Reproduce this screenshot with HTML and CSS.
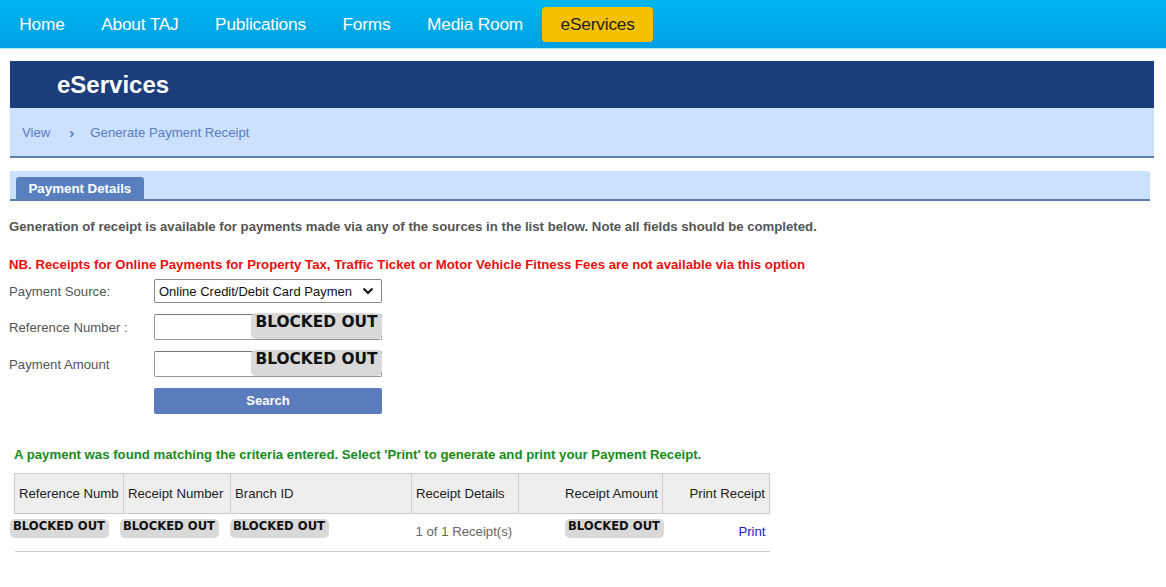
FILE: index.html
```html
<!DOCTYPE HTML>
<html>
    <head>
        <meta charset="UTF-8">
        <title>eServices - Generate Payment Receipt</title>
        <link rel="stylesheet" href="styles.css">
    </head>
    <body>
        <div class="nav">
            <a class="nav-item" href="#">Home</a>
            <a class="nav-item" href="#">About TAJ</a>
            <a class="nav-item" href="#">Publications</a>
            <a class="nav-item" href="#">Forms</a>
            <a class="nav-item" href="#">Media Room</a>
            <a class="nav-item active" href="#">eServices</a>
        </div>

        <div class="page">
            <div class="banner">eServices</div>
            <div class="crumbs">
                <span>View</span>
                <span class="sep">&#8250;</span>
                <span>Generate Payment Receipt</span>
            </div>

            <div class="tabbar">
                <div class="tab">Payment Details</div>
            </div>

            <p class="intro">Generation of receipt is available for payments made via any of the sources in the list below. Note all fields should be completed.</p>
            <p class="warn">NB. Receipts for Online Payments for Property Tax, Traffic Ticket or Motor Vehicle Fitness Fees are not available via this option</p>

            <div class="form">
                <div class="row">
                    <label>Payment Source:</label>
                    <div class="field select">
                        <span>Online Credit/Debit Card Paymen</span>
                        <svg width="12" height="8" viewBox="0 0 12 8"><path d="M1.5 1.5 L6 6 L10.5 1.5" fill="none" stroke="#111" stroke-width="2"/></svg>
                    </div>
                </div>
                <div class="row">
                    <label>Reference Number :</label>
                    <div class="field input">
                        <span class="blocked big">BLOCKED OUT</span>
                    </div>
                </div>
                <div class="row">
                    <label>Payment Amount</label>
                    <div class="field input">
                        <span class="blocked big">BLOCKED OUT</span>
                    </div>
                </div>
                <div class="row">
                    <label></label>
                    <div class="btn">Search</div>
                </div>
            </div>

            <p class="found">A payment was found matching the criteria entered. Select 'Print' to generate and print your Payment Receipt.</p>

            <table class="result">
                <colgroup>
                    <col style="width:109px">
                    <col style="width:107px">
                    <col style="width:181px">
                    <col style="width:107px">
                    <col style="width:144px">
                    <col style="width:107px">
                </colgroup>
                <thead>
                    <tr>
                        <th>Reference Numb</th>
                        <th>Receipt Number</th>
                        <th>Branch ID</th>
                        <th>Receipt Details</th>
                        <th class="right">Receipt Amount</th>
                        <th class="right">Print Receipt</th>
                    </tr>
                </thead>
                <tbody>
                    <tr>
                        <td><span class="blocked small s1">BLOCKED OUT</span></td>
                        <td><span class="blocked small s2">BLOCKED OUT</span></td>
                        <td><span class="blocked small s3">BLOCKED OUT</span></td>
                        <td class="muted">1 of 1 Receipt(s)</td>
                        <td class="right"><span class="blocked small amt">BLOCKED OUT</span></td>
                        <td class="right link"><a class="print" href="#">Print</a></td>
                    </tr>
                </tbody>
            </table>
        </div>
    </body>
</html>
```

FILE: styles.css
```css
body{margin:0;font-family:"Liberation Sans",Arial,sans-serif;background:#fff;}
p{margin:0;}
a{text-decoration:none;}

.nav{
    display:flex;
    align-items:center;
    height:48px;
    padding-left:1px;
    background:linear-gradient(#00b6ef,#009fe0);
    border-bottom:1px solid #aee6fb;
}
.nav-item{
    padding:0 18.3px;
    height:35px;
    line-height:35px;
    font-size:17.3px;
    color:#fff;
    letter-spacing:-0.2px;
}
.nav-item.active{
    background:#f5c000;
    color:#222;
    border-radius:4px;
    margin-left:1px;
}

.page{padding:12px 12px 0 10px;}
.banner{
    height:47px;
    line-height:47px;
    padding-left:47px;
    background:#1b3d7c;
    color:#fff;
    font-size:24px;
    font-weight:bold;
}
.crumbs{
    display:flex;
    align-items:center;
    height:47px;
    padding:1px 0 0 12px;
    background:#cce0ff;
    border-bottom:2px solid #5e7fab;
    color:#5b7cbd;
    font-size:13.2px;
}
.crumbs .sep{margin:0 16px 0 19px;font-size:15px;font-weight:bold;}

.tabbar{
    display:flex;
    align-items:flex-end;
    height:28px;
    margin:13px 4px 0 0;
    padding-left:6px;
    background:#cce0ff;
    border-bottom:2px solid #5e7fab;
    border-top-right-radius:3px;
}
.tab{
    height:22px;
    line-height:23px;
    padding:0 12.5px;
    background:#5a7fbf;
    color:#fff;
    font-size:13.3px;
    font-weight:bold;
    border-radius:3px 3px 0 0;
}

.intro{
    margin:18px 0 0 -1px;
    font-size:13.2px;
    font-weight:bold;
    color:#555;
}
.warn{
    margin:23px 0 0 -1px;
    font-size:13.2px;
    font-weight:bold;
    color:#e81010;
}

.form{margin:7px 0 0 -1px;}
.row{display:flex;align-items:center;margin-bottom:11px;}
.row label{width:145px;font-size:13.2px;color:#555;}
.field{
    position:relative;
    box-sizing:border-box;
    width:228px;
    background:#fff;
}
.select{
    display:flex;
    align-items:center;
    justify-content:space-between;
    height:24px;
    padding:0 7px 0 4px;
    border:1px solid #888;
    border-radius:2px;
    font-size:13px;
    color:#111;
}
.input{
    height:26px;
    border:1px solid #999;
    border-top-color:#777;
    border-radius:2px;
}
.btn{
    width:228px;
    height:26px;
    line-height:26px;
    text-align:center;
    background:#5a7bbd;
    color:#fff;
    font-size:13px;
    font-weight:bold;
    border-radius:2px;
}

.blocked{
    display:inline-block;
    background:#d9d9d9;
    color:#111;
    font-family:"DejaVu Sans",sans-serif;
    font-weight:bold;
    border-radius:5px;
}
.blocked.big{
    position:absolute;
    top:-2px;
    right:-1px;
    width:131px;
    height:26px;
    line-height:19px;
    text-align:center;
    font-size:15.4px;
}
.blocked.small{
    box-sizing:border-box;
    width:99px;
    height:19px;
    line-height:14px;
    text-align:center;
    font-size:11.6px;
    vertical-align:top;
}
.blocked.s1{margin-left:-9px;}
.blocked.s2{margin-left:-8px;}
.blocked.s3{margin-left:-5px;}
.blocked.amt{margin-right:-5px;}

.found{
    margin:33px 0 0 4px;
    font-size:13.2px;
    font-weight:bold;
    color:#1a8a1a;
}
.result{
    table-layout:fixed;
    width:755px;
    margin:11px 0 0 4px;
    border-collapse:collapse;
    font-size:13.2px;
}
.result th{
    height:39px;
    padding:0 4px;
    background:#eee;
    border:1px solid #ccc;
    font-weight:normal;
    text-align:left;
    color:#222;
    white-space:nowrap;
    overflow:hidden;
}
.result th.right,.result td.right{text-align:right;}
.result td{
    height:32px;
    padding:5px 4px 0;
    border-bottom:1px solid #ccc;
    vertical-align:top;
    white-space:nowrap;
}
.result td.muted,.result td.link{height:27px;padding-top:10px;}
.result td.muted{color:#666;}
.print{color:#1a1acc;}
```
